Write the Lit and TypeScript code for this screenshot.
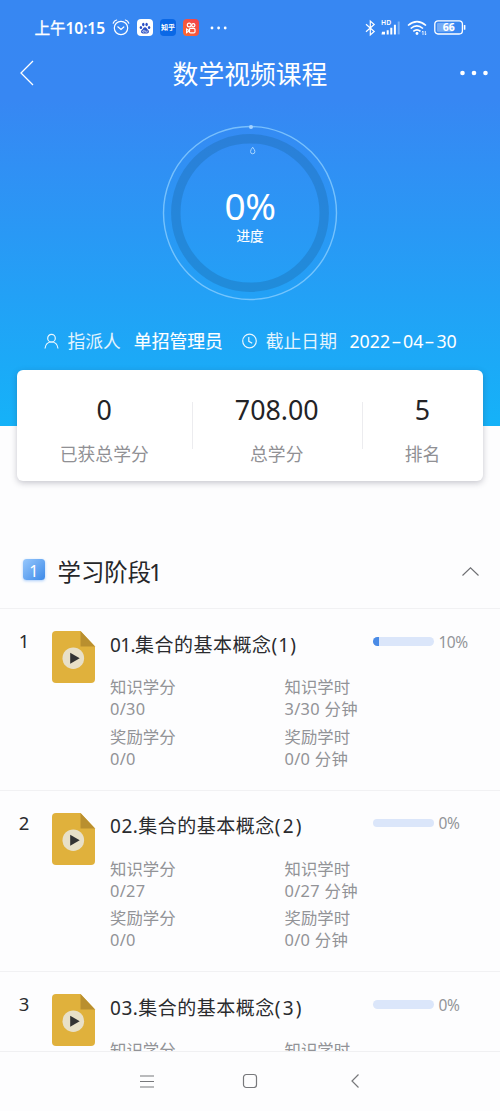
import { LitElement, html, css } from "lit";
import { customElement, property } from "lit/decorators.js";

const base = css`
  * { box-sizing: border-box; }
  svg { display: block; overflow: visible; flex: none; }
`;

@customElement("status-bar")
class StatusBar extends LitElement {
  static styles = [base, css`
    :host { display: flex; align-items: center; height: 54px; padding: 1px 34px 0 34.5px; color: #fff; }
    .time { font-size: 15.6px; line-height: 20px; font-weight: 600; width: 71px; white-space: nowrap; letter-spacing: -0.1px; }
    .ampm { font-weight: 400; -webkit-text-stroke: .35px #fff; }
    .clock { margin-left: 6.5px; }
    .app { width: 16px; height: 17px; border-radius: 4px; display: flex; align-items: center; justify-content: center; }
    .paw { margin-left: 7px; background: #fff; }
    .zhihu { margin-left: 7px; background: #0a68e6; font-size: 7px; line-height: 10px; font-weight: 700; white-space: nowrap; }
    .kuai { margin-left: 7px; background: linear-gradient(45deg, #ff6a2c, #f0414f); }
    .more { margin-left: 11px; }
    .bt { margin-left: auto; }
    .signal { margin-left: 5px; }
    .wifi { margin-left: 6.5px; }
    .battery { margin-left: 7px; }
    .lvl { font-size: 10.5px; font-weight: 700; }
    .hd { font-size: 6.8px; font-weight: 600; }
  `];
  render() {
    return html`
      <span class="time"><span class="ampm">上午</span>10:15</span>
      <svg class="clock" width="18" height="17" viewBox="0 0 18 17" fill="none" stroke="#fff" stroke-width="1.2" stroke-linecap="round">
        <circle cx="9" cy="9" r="6.7"/><path d="M5.8 7.8 9 10.4l2.8-2.4M1.2 4.2Q2 1.8 4.6 1M16.8 4.2Q16 1.8 13.4 1"/>
      </svg>
      <span class="app paw">
        <svg width="12" height="12" viewBox="0 0 12 12" fill="#2a4fc4">
          <ellipse cx="1.9" cy="5.5" rx="1.2" ry="1.6"/><ellipse cx="4.3" cy="2.5" rx="1.2" ry="1.7"/><ellipse cx="7.6" cy="2.5" rx="1.2" ry="1.7"/><ellipse cx="10.1" cy="5.5" rx="1.2" ry="1.6"/>
          <path d="M6 5.2C4.5 5.2 4 7 2.8 8.1 1.3 9.6 2.3 11.8 4.2 11.5h3.6c1.9.3 2.9-1.9 1.4-3.4C8 7 7.5 5.2 6 5.2Z"/>
          <path d="M5.2 7.8v2.4H4.1a.8.8 0 0 1 0-1.5h1M6.6 8.5v1.7h1.6V8.5" fill="none" stroke="#fff" stroke-width=".6"/>
        </svg>
      </span>
      <span class="app zhihu">知乎</span>
      <span class="app kuai">
        <svg width="12" height="12" viewBox="0 0 12 12" fill="none" stroke="#fff" stroke-width="1.2">
          <circle cx="4.2" cy="3" r="1.9"/><circle cx="8.3" cy="3.3" r="1.6"/><rect x="4.4" y="6.3" width="5.6" height="4.6" rx="1.2"/><path d="M4.4 8.7 1.6 7v3.6Z"/>
        </svg>
      </span>
      <svg class="more" width="17" height="4" viewBox="0 0 17 4" fill="#fff"><circle cx="2" cy="2" r="1.4"/><circle cx="8.6" cy="2" r="1.4"/><circle cx="15.2" cy="2" r="1.4"/></svg>
      <svg class="bt" width="11" height="16" viewBox="0 0 11 16" fill="none" stroke="#fff" stroke-width="1.2"><path d="M1 4.3 9.2 11.5 5.3 15V1l3.9 3.5L1 11.7"/></svg>
      <svg class="signal" width="20" height="15" viewBox="0 0 20 15" fill="#fff">
        <text class="hd" x="0" y="5">HD</text>
        <path d="M1 11.8h3v2.6H.5ZM5.7 10.3h2v4.1h-2ZM9.3 7.8h2v6.6h-2ZM12.9 4.8h2v9.6h-2Z"/><path opacity=".35" d="M16.7 1.5h2v12.9h-2Z"/>
      </svg>
      <svg class="wifi" width="20" height="16" viewBox="0 0 20 16" fill="none" stroke="#fff" stroke-width="1.6">
        <path d="M1 5.5Q10-2.2 19 5.5M3.7 8.5q6.2-5.2 12.3 0M6.3 11.3q3.7-3 7.2 0"/><circle cx="10" cy="13.5" r="1.4" fill="#fff" stroke="none"/><path stroke-width=".8" d="M16 15v-4l-1 1.2M18.3 11v4l1-1.2"/>
      </svg>
      <svg class="battery" width="32" height="15" viewBox="0 0 32 15">
        <rect x=".8" y=".8" width="27.6" height="13.2" rx="3.2" fill="none" stroke="#fff" stroke-width="1.3"/>
        <rect x="3" y="3" width="16" height="8.8" rx="1" fill="#fff" opacity=".3"/><rect x="29.8" y="5" width="1.6" height="4.8" rx=".6" fill="#fff"/>
        <text class="lvl" x="14.7" y="11.200" text-anchor="middle" fill="#fff">66</text>
      </svg>`;
  }
}

@customElement("progress-ring")
class ProgressRing extends LitElement {
  @property({ type: Number }) value = 0;
  static styles = [base, css`
    :host { display: grid; width: 180px; height: 180px; color: #fff; }
    svg, .label { grid-area: 1 / 1; }
    .label { display: flex; flex-direction: column; align-items: center; padding-top: 64.5px; }
    .pct { font-size: 37px; line-height: 36px; letter-spacing: -0.5px; }
    .cap { font-size: 13.5px; line-height: 18px; -webkit-text-stroke: .15px #fff; margin-top: 3px; }
  `];
  render() {
    return html`
      <svg width="180" height="180" viewBox="0 0 180 180" fill="none">
        <circle cx="90" cy="90" r="74.2" stroke="#1d6cae" stroke-opacity=".38" stroke-width="9.4"/>
        <circle cx="90" cy="90" r="86.5" stroke="#8fd0ff" stroke-opacity=".75" stroke-width="1.4"/>
        <circle cx="91" cy="4" r="2" fill="#a5d3ff"/>
        <path d="M92.7 24.2q-2.2 2.8-2.2 4.4a2.2 2.2 0 0 0 4.4 0q0-1.6-2.2-4.4Z" stroke="#a8d6ff" stroke-width="1"/>
      </svg>
      <div class="label"><span class="pct">${this.value}%</span><span class="cap">进度</span></div>`;
  }
}

@customElement("course-item")
class CourseItem extends LitElement {
  @property({ type: Number }) index = 1;
  @property({ type: Number }) total = 0;
  @property({ type: Number }) done = 0;
  @property({ type: Number }) pct = 0;
  static styles = [base, css`
    :host { display: grid; grid-template-columns: 52px 58px 1fr; height: 181.5px; border-top: 1px solid #f1f1f3; flex: none; }
    .num { font-size: 18.5px; line-height: 24px; text-align: center; padding: 20px 4px 0 0; color: #2a2b2e; }
    .icon { padding-top: 22px; }
    .head { display: grid; grid-template-columns: 262.5px 61.5px 1fr; height: 67px; padding-top: 21.5px; }
    .title { font-size: 19px; line-height: 28px; color: #2a2b2e; white-space: nowrap; letter-spacing: .5px; }
    .tail { letter-spacing: 2.1px; }
    .narrow .lead { letter-spacing: -.6px; }
    .narrow .tail { letter-spacing: 1px; }
    .bar { height: 8.5px; margin-top: 6.5px; border-radius: 5px; background: #dbe6fa; overflow: hidden; }
    .fill { height: 100%; background: #4a8be6; }
    .pct { padding-left: 4.5px; font-size: 15.5px; line-height: 22px; color: #939599; letter-spacing: -.5px; }
    .stats { display: grid; grid-template-columns: 174.5px 1fr; row-gap: 5.5px; font-size: 16.4px; line-height: 22px; color: #929397; white-space: nowrap; }
    .stats span { display: block; }
    .v { letter-spacing: .3px; }
  `];
  stat(label: string, value: string) {
    return html`<div><span>${label}</span><span class="v">${value}</span></div>`;
  }
  render() {
    return html`
      <div class="num">${this.index}</div>
      <div class="icon">
        <svg width="43" height="52" viewBox="0 0 43 52">
          <path fill="#e0b13c" d="M4 0h24.5L43 15.5V48a4 4 0 0 1-4 4H4a4 4 0 0 1-4-4V4a4 4 0 0 1 4-4Z"/>
          <path fill="#b98f2f" d="M28.5 0 43 15.5H28.5Z"/><circle cx="21.3" cy="27.2" r="10.8" fill="#e8e0c8"/><path fill="#333" d="m18.2 21.7 9.500 5.500-9.500 5.500Z"/>
        </svg>
      </div>
      <div>
        <div class="head">
          <span class="title ${this.index === 1 ? "narrow" : ""}"><span class="lead">0${this.index}.</span>集合的基本概念<span class="tail">(${this.index})</span></span>
          <div class="bar"><div class="fill" style="width:${this.pct}%"></div></div>
          <span class="pct">${this.pct}%</span>
        </div>
        <div class="stats">
          ${this.stat("知识学分", `0/${this.total}`)}${this.stat("知识学时", `${this.done}/${this.total} 分钟`)}
          ${this.stat("奖励学分", "0/0")}${this.stat("奖励学时", "0/0 分钟")}
        </div>
      </div>`;
  }
}

@customElement("app-root")
class AppRoot extends LitElement {
  static styles = [base, css`
    :host { display: flex; flex-direction: column; width: 500px; height: 1111px; overflow: hidden; background: #fdfdfe; font-family: "Noto Sans", "Noto Sans CJK SC", sans-serif; }
    .hero { height: 426px; flex: none; background: linear-gradient(#3787f2 0, #3787f3 100px, #15b2f8 426px); color: #fff; display: flex; flex-direction: column; }
    .nav { display: flex; align-items: center; justify-content: space-between; height: 38px; padding: 0 11px 0 21px; }
    .nav h1 { margin: 2px 0 0 6px; font-size: 25.8px; line-height: 36px; font-weight: 400; }
    .ring { align-self: center; margin-top: 31px; }
    .info { display: flex; align-items: center; margin: 25px 0 0 44px; height: 26px; font-size: 17.8px; line-height: 26px; white-space: nowrap; }
    .info span { opacity: .88; }
    .info svg { opacity: .9; }
    .info b { font-weight: 400; margin-left: 13px; -webkit-text-stroke: .15px #fff; }
    .info .date { margin-left: 12.5px; -webkit-text-stroke: 0; }
    .person { margin-left: 8.5px; }
    .until { margin-left: 8.5px; }
    .clock { margin-left: 19.5px; }
    .dash { display: inline-block; width: 13px; text-align: center; font-style: normal; transform: scaleX(1.8); }
    .card { display: grid; grid-template-columns: 174.5px 170.5px 1fr; height: 111px; margin: -56px 17px 0; flex: none; background: #fff; border-radius: 6px; box-shadow: 0 2px 6px rgba(40,40,60,.26); text-align: center; }
    .cell { padding-top: 23px; display: grid; grid-template-rows: 34px 26px; row-gap: 14px; position: relative; }
    .cell + .cell::before { content: ""; position: absolute; left: 0; top: 32px; height: 47px; width: 1px; background: #ececef; }
    .cell b { font-weight: 400; font-size: 26.8px; line-height: 34px; color: #232326; }
    .cell span { font-size: 17.8px; line-height: 26px; color: #909094; }
    .stage { display: flex; align-items: center; height: 73px; margin-top: 54px; padding: 0 21px 0 23px; flex: none; }
    .badge { width: 21.5px; height: 21.5px; margin-top: -4px; border-radius: 3.5px; background: linear-gradient(135deg, #96c7fc, #3d8ae9); box-shadow: 0 1px 3px #a9cdfa; color: #fff; font-size: 16px; line-height: 24px; text-align: center; }
    .stage h2 { flex: 1; margin: 0 0 0 13px; font-size: 23.4px; line-height: 32px; font-weight: 400; color: #252629; }
    .stage h2 span { margin-left: -2px; }
    .list { flex: 1; min-height: 0; overflow: hidden; display: flex; flex-direction: column; }
    .sys { height: 60px; flex: none; border-top: 1px solid #f0f0f2; background: #fdfdfe; display: flex; align-items: center; padding: 0 0 1px 140px; }
    .sys .home { margin: 0 94px 0 89px; }
  `];
  render() {
    return html`
      <div class="hero">
        <status-bar></status-bar>
        <div class="nav">
          <svg width="13" height="24" viewBox="0 0 13 24" fill="none" stroke="#fff" stroke-width="1.3"><path d="M12 0 0 12l12 12"/></svg>
          <h1>数学视频课程</h1>
          <svg width="29" height="6" viewBox="0 0 29 6" fill="#fff"><circle cx="2.5" cy="3" r="2.3"/><circle cx="14" cy="3" r="2.3"/><circle cx="25.5" cy="3" r="2.3"/></svg>
        </div>
        <progress-ring class="ring" .value=${0}></progress-ring>
        <div class="info">
          <svg width="15" height="15" viewBox="0 0 15 15" fill="none" stroke="#fff" stroke-width="1.2"><circle cx="7.5" cy="4.2" r="3.8"/><path d="M1 14.5Q1.800 8 7.500 8t6.500 6.500"/></svg>
          <span class="person">指派人</span><b>单招管理员</b>
          <svg class="clock" width="15" height="15" viewBox="0 0 15 15" fill="none" stroke="#fff" stroke-width="1.2"><circle cx="7.5" cy="7" r="6.8"/><path d="M6.800 3v4.300l3.400 2"/></svg>
          <span class="until">截止日期</span><b class="date">2022<i class="dash">-</i>04<i class="dash">-</i>30</b>
        </div>
      </div>
      <div class="card">
        <div class="cell"><b>0</b><span>已获总学分</span></div>
        <div class="cell"><b>708.00</b><span>总学分</span></div>
        <div class="cell"><b>5</b><span>排名</span></div>
      </div>
      <div class="stage">
        <div class="badge">1</div>
        <h2>学习阶段<span>1</span></h2>
        <svg width="17" height="9" viewBox="0 0 17 9" fill="none" stroke="#6d6e72" stroke-width="1.1"><path d="M.5 8.500 8.500.8l8 7.700"/></svg>
      </div>
      <div class="list">
        <course-item .index=${1} .total=${30} .done=${3} .pct=${10}></course-item>
        <course-item .index=${2} .total=${27}></course-item>
        <course-item .index=${3} .total=${27}></course-item>
      </div>
      <div class="sys">
        <svg width="14" height="13" viewBox="0 0 14 13" stroke="#77787b" stroke-width="1.1"><path d="M0 1h14M0 6.500h14M0 12h14"/></svg>
        <svg class="home" width="14" height="14" viewBox="0 0 14 14" fill="none" stroke="#77787b" stroke-width="1.2"><rect x=".5" y=".5" width="13" height="13" rx="2.8"/></svg>
        <svg width="8" height="14" viewBox="0 0 8 14" fill="none" stroke="#77787b" stroke-width="1.2"><path d="M7.500.5 1 7l6.500 6.500"/></svg>
      </div>`;
  }
}
